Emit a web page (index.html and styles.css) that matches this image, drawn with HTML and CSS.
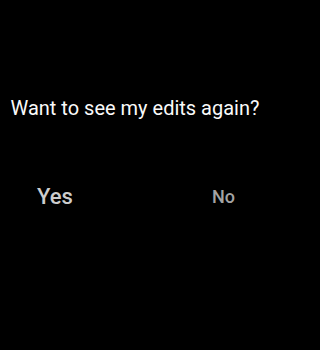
FILE: index.html
```html
<!DOCTYPE html>
<html>
<head>
<meta charset="utf-8">
<link rel="stylesheet" href="styles.css">
</head>
<body>
<div class="screen">
  <p class="question">Want to see my edits again?</p>
  <div class="actions">
    <span class="btn yes">Yes</span>
    <span class="btn no">No</span>
  </div>
</div>
</body>
</html>
```
FILE: styles.css
```css
html, body {
  margin: 0;
  padding: 0;
  background: #000;
}
.screen {
  width: 270px;
  height: 350px;
  font-family: Roboto, "Noto Sans", sans-serif;
  display: flex;
  flex-direction: column;
}
.question {
  margin: 96px 0 0;
  text-align: center;
  color: #fafafa;
  font-size: 20px;
  line-height: 24px;
}
.actions {
  display: flex;
  align-items: center;
  justify-content: space-between;
  padding: 0 35px 0 37px;
  margin-top: 65px;
}
.btn {
  line-height: 24px;
}
.yes {
  font-size: 22px;
  font-weight: 500;
  color: #cdcdcd;
}
.no {
  font-size: 18px;
  font-weight: 500;
  color: #a3a3a3;
}
```
